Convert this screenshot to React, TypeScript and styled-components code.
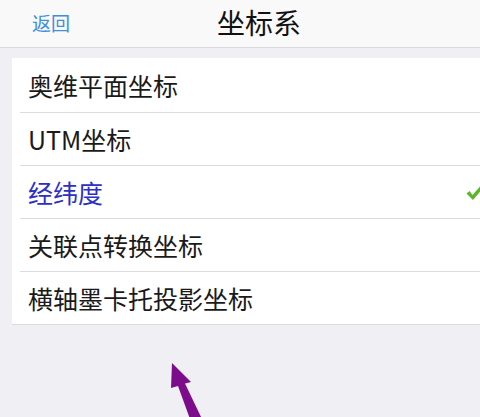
import styled, { createGlobalStyle } from "styled-components";

const GlobalStyle = createGlobalStyle`
  html, body {
    margin: 0;
    padding: 0;
    background: #efeff4;
  }
`;

const Page = styled.div`
  position: relative;
  display: flex;
  flex-direction: column;
  width: 480px;
  height: 417px;
  overflow: hidden;
  background: #efeff4;
  font-family: "PingFang SC", "Noto Sans CJK SC", "Noto Sans", sans-serif;
`;

const NavBar = styled.div`
  display: flex;
  align-items: center;
  height: 47px;
  padding-left: 32px;
  background: #f9f9f9;
  border-bottom: 1px solid #d9d9dd;
`;

const BackButton = styled.span`
  width: 185px;
  margin-top: -3px;
  font-size: 19px;
  color: #3f8fd9;
`;

const Title = styled.span`
  margin-top: -4px;
  font-size: 28px;
  color: #111;
`;

const Content = styled.div`
  padding: 10px 0 0 12px;
`;

const List = styled.div`
  width: 472px;
  background: #fff;
  box-shadow: 0 1px 0 #dcdce0;
`;

const Row = styled.div<{ $first?: boolean }>`
  display: flex;
  align-items: center;
  justify-content: space-between;
  height: ${(p) => (p.$first ? "54px" : "53px")};
  margin-left: 8px;
  padding-left: 8px;
  border-top: ${(p) => (p.$first ? "none" : "1px solid #dcdcdf")};
  box-sizing: border-box;
`;

const Label = styled.span<{ $active?: boolean }>`
  font-size: 25px;
  color: ${(p) => (p.$active ? "#2c30c4" : "#1a1a1a")};
`;

const Check = styled.svg`
  width: 18px;
  height: 16px;
  margin-top: 2px;
`;

const Arrow = styled.svg`
  position: absolute;
  left: 160px;
  top: 355px;
  width: 60px;
  height: 62px;
`;

const items = [
  "奥维平面坐标",
  "UTM坐标",
  "经纬度",
  "关联点转换坐标",
  "横轴墨卡托投影坐标",
];

const selected = 2;

export default function App() {
  return (
    <Page>
      <GlobalStyle />
      <NavBar>
        <BackButton>返回</BackButton>
        <Title>坐标系</Title>
      </NavBar>
      <Content>
        <List>
          {items.map((label, i) => (
            <Row key={label} $first={i === 0}>
              <Label $active={i === selected}>{label}</Label>
              {i === selected && (
                <Check viewBox="0 0 18 16">
                  <path
                    d="M0.5 8.5 L3.5 6 L6.5 10 L15 0.5 L17.5 2.5 L7 15 Z"
                    fill="#5db52b"
                  />
                </Check>
              )}
            </Row>
          ))}
        </List>
      </Content>
      <Arrow viewBox="0 0 60 62">
        <polygon
          points="12,8 31,27 25,28.5 42,64 30,64 18,31 11,33"
          fill="#7d0c8c"
        />
      </Arrow>
    </Page>
  );
}
